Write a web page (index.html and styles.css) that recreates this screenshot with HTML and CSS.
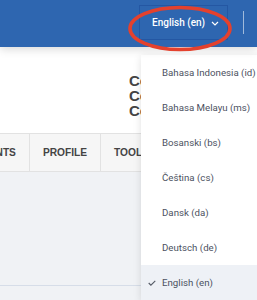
FILE: index.html
```html
<!DOCTYPE html>
<html>
<head>
<meta charset="utf-8">
<link rel="stylesheet" href="styles.css">
</head>
<body>
    <div class="header">
        <div class="lang">
            English (en)
            <svg class="caret" width="8" height="5" viewBox="0 0 8 5"><path d="M1 1l3 3 3-3" fill="none" stroke="#fff" stroke-width="1.2"/></svg>
        </div>
        <span class="sep"></span>
    </div>

    <div class="intro">
        <div class="links">
            <div>Courses</div>
            <div>Competencies</div>
            <div>Contact</div>
        </div>
    </div>

    <div class="tabs">
        <div class="tab">STUDENTS</div>
        <div class="tab">PROFILE</div>
        <div class="tab">TOOLS</div>
    </div>

    <div class="panel">
        <div class="rule"></div>
    </div>

    <ul class="menu">
        <li class="item"><span class="check"></span>Bahasa Indonesia (id)</li>
        <li class="item"><span class="check"></span>Bahasa Melayu (ms)</li>
        <li class="item"><span class="check"></span>Bosanski (bs)</li>
        <li class="item"><span class="check"></span>Čeština (cs)</li>
        <li class="item"><span class="check"></span>Dansk (da)</li>
        <li class="item"><span class="check"></span>Deutsch (de)</li>
        <li class="item active"><span class="check"><svg width="8" height="6" viewBox="0 0 8 6"><path d="M0.7 3l2.2 2.2L7.3 0.8" fill="none" stroke="#555b66" stroke-width="1.1"/></svg></span>English (en)</li>
    </ul>

    <svg class="circle" width="108" height="50" viewBox="0 0 108 50">
        <ellipse cx="54" cy="24.5" rx="50" ry="21" fill="none" stroke="#e4412d" stroke-width="3.6"/>
    </svg>
</body>
</html>
```

FILE: styles.css
```css
html, body {
    margin: 0;
    padding: 0;
    height: 300px;
    overflow: hidden;
}
body {
    font-family: "Liberation Sans", Arial, sans-serif;
    background: #f0f2f5;
    white-space: nowrap;
}
.header {
    position: relative;
    z-index: 1;
    height: 47px;
    background: #2e66b0;
    display: flex;
    align-items: center;
    justify-content: flex-end;
    padding-right: 13px;
    box-shadow: 0 2px 9px rgba(0,0,0,0.16);
}
.lang {
    box-sizing: border-box;
    width: 89px;
    height: 35px;
    margin-top: -2px;
    padding-left: 12px;
    border: 1px solid #2457a3;
    color: #fff;
    font-family: Roboto, sans-serif;
    font-size: 10px;
    font-weight: 500;
    display: flex;
    align-items: center;
    gap: 6px;
}
.caret {
    margin-top: 1px;
}
.sep {
    width: 1px;
    height: 23px;
    margin-left: 15px;
    margin-top: -3px;
    background: rgba(255,255,255,0.55);
}
.intro {
    height: 86px;
    background: #fff;
    padding-left: 129px;
    box-sizing: border-box;
    padding-top: 26px;
}
.links {
    color: #444;
    font-weight: bold;
    font-size: 15px;
    line-height: 15px;
}
.tabs {
    display: flex;
    height: 37px;
    background: #f6f6f6;
    border-top: 1px solid #e2e2e2;
    border-bottom: 1px solid #e2e2e2;
    margin-left: -52px;
}
.tab {
    display: flex;
    align-items: center;
    padding: 0 13px 0 13px;
    border-right: 1px solid #e2e2e2;
    color: #444;
    font-size: 10.2px;
    font-weight: bold;
}
.panel {
    padding-top: 113px;
}
.rule {
    height: 1px;
    background: #d6dde8;
}
.menu {
    position: absolute;
    left: 141px;
    right: -40px;
    top: 55px;
    margin: 0;
    padding: 0;
    list-style: none;
    background: #fff;
    box-shadow: 0 2px 8px rgba(0,0,0,0.12);
    font-family: Roboto, sans-serif;
    font-size: 9.7px;
    color: #4b5161;
}
.item {
    height: 35px;
    display: flex;
    align-items: center;
    padding-left: 7px;
}
.check {
    width: 14px;
    display: flex;
    align-items: center;
}
.active {
    background: #eef1f6;
}
.circle {
    position: absolute;
    z-index: 2;
    left: 126px;
    top: 4px;
}
```
